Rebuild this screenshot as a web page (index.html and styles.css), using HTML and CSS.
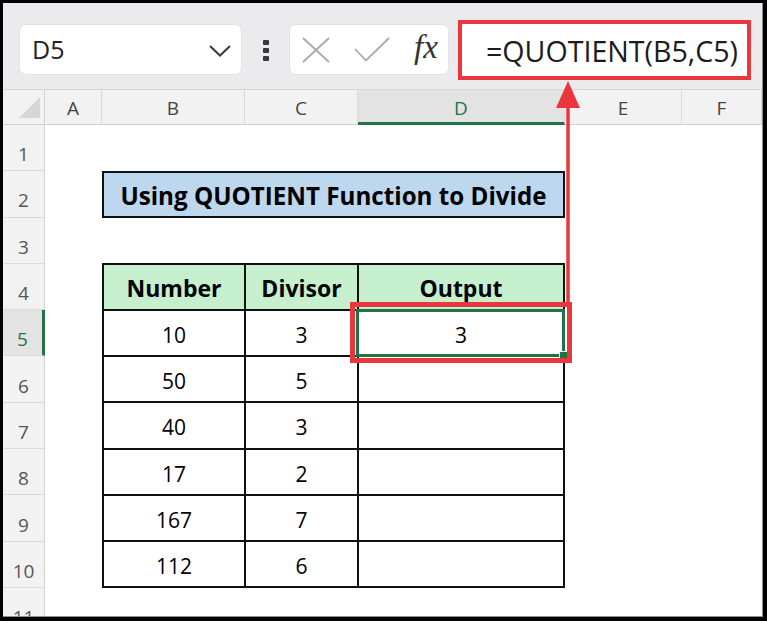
FILE: index.html
```html
<!DOCTYPE html>
<html>
<head>
<meta charset="utf-8">
<link rel="stylesheet" href="styles.css">
</head>
<body>
<div class="frame">
  <div class="app">
    <div class="toolbar">
      <div class="namebox">
        <span class="ref">D5</span>
        <svg class="chev" width="22" height="12" viewBox="0 0 22 12"><polyline points="1,1 11,10.5 21,1" fill="none" stroke="#3a3a3a" stroke-width="2"/></svg>
      </div>
      <div class="dots"><i></i><i></i><i></i></div>
      <div class="fbtns">
        <svg class="xicon" width="28" height="26" viewBox="0 0 28 26"><path d="M1 1 L27 25 M27 1 L1 25" stroke="#a9a9ad" stroke-width="1.8" fill="none"/></svg>
        <svg class="chk" width="36" height="25" viewBox="0 0 36 25"><polyline points="1,12 12,23.5 35,1" fill="none" stroke="#a9a9ad" stroke-width="1.8"/></svg>
        <span class="fx">fx</span>
      </div>
      <div class="formula">=QUOTIENT(B5,C5)</div>
    </div>
    <div class="sheet">
      <div class="corner"><svg width="21" height="21" viewBox="0 0 21 21"><polygon points="21,0 21,21 0,21" fill="#d6d6d8"/></svg></div>
      <div class="colh">A</div>
      <div class="colh">B</div>
      <div class="colh">C</div>
      <div class="colh sel">D</div>
      <div class="colh">E</div>
      <div class="colh">F</div>
      <div class="rowh">1</div>
      <div class="rowh">2</div>
      <div class="rowh">3</div>
      <div class="rowh">4</div>
      <div class="rowh sel">5</div>
      <div class="rowh">6</div>
      <div class="rowh">7</div>
      <div class="rowh">8</div>
      <div class="rowh">9</div>
      <div class="rowh">10</div>
      <div class="rowh">11</div>
      <div class="title">Using QUOTIENT Function to Divide</div>
      <div class="tbl">
        <div class="th">Number</div><div class="th">Divisor</div><div class="th">Output</div>
        <div class="td">10</div><div class="td">3</div><div class="td active">3</div>
        <div class="td">50</div><div class="td">5</div><div class="td"></div>
        <div class="td">40</div><div class="td">3</div><div class="td"></div>
        <div class="td">17</div><div class="td">2</div><div class="td"></div>
        <div class="td">167</div><div class="td">7</div><div class="td"></div>
        <div class="td">112</div><div class="td">6</div><div class="td"></div>
      </div>
    </div>
    <div class="redbox"></div>
    <svg class="arrow" width="30" height="226" viewBox="0 0 30 226">
      <line x1="15" y1="24" x2="15" y2="226" stroke="#e8383d" stroke-width="3.5"/>
      <polygon points="15,2 3,29 27,29" fill="#e8383d"/>
    </svg>
  </div>
</div>
</body>
</html>
```

FILE: styles.css
```css
html, body {
  margin: 0;
  padding: 0;
  background: #000;
  overflow: hidden;
}

.frame {
  width: 767px;
  height: 621px;
  box-sizing: border-box;
  padding: 3px 4px 4px 3px;
  background: #000;
}

.app {
  position: relative;
  width: 760px;
  height: 614px;
  box-sizing: border-box;
  background: #fff;
  overflow: hidden;
  border-right: 1px solid #8e8e8e;
  border-bottom: 1px solid #8e8e8e;
  font-family: "Open Sans", "Noto Sans", sans-serif;
}

/* ---------- formula bar ---------- */
.toolbar {
  height: 87px;
  box-sizing: border-box;
  background: #ebebee;
  border-bottom: 1px solid #d6d6d8;
  display: flex;
  align-items: flex-start;
  padding-left: 16px;
}

.namebox {
  margin-top: 21px;
  width: 223px;
  height: 51px;
  box-sizing: border-box;
  background: #fff;
  border: 1px solid #e2e2e6;
  border-radius: 7px;
  display: flex;
  align-items: center;
  justify-content: space-between;
  padding: 0 10px 0 12px;
}

.ref {
  font-size: 25px;
  color: #222;
  line-height: 1;
}

.chev {
  margin-top: 2px;
}

.dots {
  margin-left: 21px;
  margin-top: 37px;
  display: flex;
  flex-direction: column;
  gap: 3px;
}

.dots i {
  display: block;
  width: 6px;
  height: 5px;
  background: #3a3a3a;
  border-radius: 1px;
}

.fbtns {
  margin-left: 20px;
  margin-top: 21px;
  width: 160px;
  height: 51px;
  box-sizing: border-box;
  background: #fff;
  border: 1px solid #e2e2e6;
  border-radius: 7px;
  display: flex;
  align-items: center;
  padding-left: 12px;
}

.chk {
  margin-left: 24px;
}

.fx {
  margin-left: 24px;
  font-family: "Liberation Serif", serif;
  font-style: italic;
  font-size: 33px;
  color: #333;
  line-height: 1;
  margin-top: -4px;
}

.formula {
  margin-left: 9px;
  margin-top: 17px;
  width: 293px;
  height: 60px;
  box-sizing: border-box;
  background: #fff;
  border: 4px solid #e8383d;
  display: flex;
  align-items: center;
  padding-left: 24px;
  font-size: 28.6px;
  color: #1c1c1c;
  white-space: nowrap;
}

/* ---------- sheet ---------- */
.sheet {
  display: grid;
  grid-template-columns: 42px 57px 143px 113px 207px 117px 1fr;
  grid-template-rows: 35px repeat(11, 46.3px);
  background: #fff;
}

.corner {
  background: #f2f2f2;
  border-right: 1px solid #d2d2d2;
  border-bottom: 1px solid #d2d2d2;
  display: flex;
  align-items: flex-end;
  padding-left: 16px;
  padding-bottom: 6px;
}

.colh {
  background: #f2f2f2;
  border-right: 1px solid #dadada;
  border-bottom: 1px solid #d2d2d2;
  display: flex;
  align-items: center;
  justify-content: center;
  font-size: 19px;
  color: #444;
  padding-top: 2px;
}

.colh.sel {
  background: #e3e3e3;
  color: #217346;
  border-bottom: 3px solid #217346;
  padding-top: 4px;
}

.rowh {
  grid-column: 1;
  background: #f2f2f2;
  border-right: 1px solid #cfcfcf;
  border-bottom: 1px solid #dadada;
  display: flex;
  align-items: center;
  justify-content: center;
  font-size: 19px;
  color: #555;
  padding-top: 13px;
}

.rowh.sel {
  background: #e3e3e3;
  color: #217346;
  border-right: 3px solid #217346;
}

.title {
  grid-row: 3;
  grid-column: 3 / 6;
  background: #bdd7ee;
  border: 2px solid #111;
  display: flex;
  align-items: center;
  justify-content: center;
  font-family: "Open Sans", sans-serif;
  font-weight: 700;
  font-size: 24.2px;
  color: #000;
  padding-top: 2px;
}

.tbl {
  grid-row: 5 / 12;
  grid-column: 3 / 6;
  display: grid;
  grid-template-columns: 140px 111px 1fr;
  grid-template-rows: repeat(7, 1fr);
  gap: 2px;
  padding: 2px;
  margin-top: -1px;
  background: #111;
  font-family: "Open Sans", sans-serif;
}

.th,
.td {
  display: flex;
  align-items: center;
  justify-content: center;
  color: #000;
}

.th {
  background: #c6efce;
  font-weight: 700;
  font-size: 23px;
  padding-top: 2px;
}

.td {
  background: #fff;
  font-size: 21px;
  padding-top: 4px;
}

.td.active {
  position: relative;
}

.td.active::before {
  content: "";
  position: absolute;
  top: -2px;
  left: -3px;
  right: -2px;
  bottom: -2px;
  border: 3px solid #217346;
}

.td.active::after {
  content: "";
  position: absolute;
  right: -5px;
  bottom: -5px;
  width: 7px;
  height: 7px;
  background: #217346;
  border: 1px solid #fff;
}

/* ---------- annotations ---------- */
.redbox {
  position: absolute;
  left: 347px;
  top: 299px;
  width: 222px;
  height: 61px;
  box-sizing: border-box;
  border: 5px solid #e8383d;
}

.arrow {
  position: absolute;
  left: 550px;
  top: 76px;
}
```
